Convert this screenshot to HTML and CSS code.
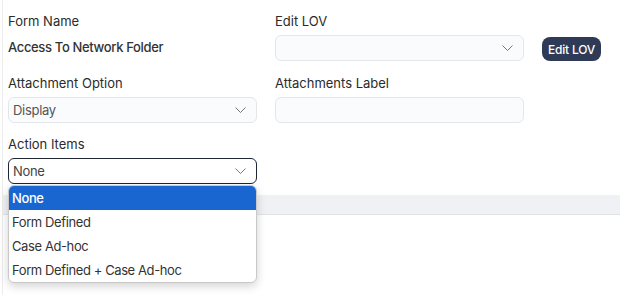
FILE: index.html
```html
<!DOCTYPE html>
<html lang="en">
<head>
    <meta charset="UTF-8">
    <meta name="viewport" content="width=device-width, initial-scale=1.0">
    <title>Form settings</title>
    <link rel="stylesheet" href="styles.css">
</head>
<body>
    <div class="card">
        <div class="form-grid">
            <div class="field">
                <div class="field-label">Form Name</div>
                <div class="field-value">Access To Network Folder</div>
            </div>
            <div class="field">
                <div class="field-label">Edit LOV</div>
                <div class="select">
                    <span class="select-text"></span>
                    <svg class="chevron" width="11" height="6" viewBox="0 0 11 6"><path d="M0.5 0.5 L5.5 5.5 L10.5 0.5" fill="none" stroke="#666" stroke-width="0.9"/></svg>
                </div>
            </div>
            <div class="field field-button">
                <button class="btn-dark">Edit LOV</button>
            </div>

            <div class="field">
                <div class="field-label">Attachment Option</div>
                <div class="select">
                    <span class="select-text">Display</span>
                    <svg class="chevron" width="11" height="6" viewBox="0 0 11 6"><path d="M0.5 0.5 L5.5 5.5 L10.5 0.5" fill="none" stroke="#666" stroke-width="0.9"/></svg>
                </div>
            </div>
            <div class="field">
                <div class="field-label">Attachments Label</div>
                <div class="input"></div>
            </div>
            <div></div>

            <div class="field">
                <div class="field-label">Action Items</div>
                <div class="select-wrap">
                    <div class="select focused">
                        <span class="select-text">None</span>
                        <svg class="chevron" width="11" height="6" viewBox="0 0 11 6"><path d="M0.5 0.5 L5.5 5.5 L10.5 0.5" fill="none" stroke="#666" stroke-width="0.9"/></svg>
                    </div>
                    <div class="dropdown">
                        <div class="option selected">None</div>
                        <div class="option">Form Defined</div>
                        <div class="option">Case Ad-hoc</div>
                        <div class="option">Form Defined + Case Ad-hoc</div>
                    </div>
                </div>
            </div>
        </div>

        <div class="section-bar"></div>
    </div>
</body>
</html>
```

FILE: styles.css
```css
body {
    margin: 0;
    background-color: #ffffff;
    color: #333333;
    font-family: Inter, "Noto Sans", sans-serif;
    font-size: 13px;
}
.card {
    border-left: 1px solid #ececec;
    margin-left: 2px;
    padding-top: 13px;
    height: 282px;
}
.form-grid {
    display: grid;
    grid-template-columns: 249px 249px auto;
    column-gap: 18px;
    row-gap: 13.5px;
    padding-left: 5px;
}
.field {
    display: flex;
    flex-direction: column;
    gap: 6px;
}
.field-label {
    height: 16px;
    line-height: 16px;
    color: #2b2b2b;
}
.field-value {
    height: 26px;
    line-height: 24px;
    font-weight: 500;
    letter-spacing: -0.35px;
    color: #333333;
}
.field-button {
    justify-content: flex-end;
}
.btn-dark {
    width: 59px;
    height: 24px;
    padding: 0;
    border: none;
    border-radius: 8px;
    background-color: #2e3a56;
    color: #ffffff;
    font-family: inherit;
    font-size: 12px;
    font-weight: 500;
    letter-spacing: -0.2px;
}
.select,
.input {
    box-sizing: border-box;
    height: 26px;
    border: 1px solid #e4e6ea;
    border-radius: 6px;
    background-color: #fafbfc;
}
.select {
    display: flex;
    align-items: center;
    justify-content: space-between;
    padding: 0 10px 0 4px;
}
.select-text {
    letter-spacing: -0.3px;
    color: #555555;
}
.select.focused {
    border-color: #1e2533;
    background-color: #ffffff;
}
.select.focused .select-text {
    color: #444444;
}
.select-wrap {
    position: relative;
}
.dropdown {
    position: absolute;
    top: 27px;
    left: 0;
    width: 249px;
    box-sizing: border-box;
    border-radius: 6px;
    border: 1px solid #c9c9c9;
    background-color: #ffffff;
    box-shadow: 0 3px 10px rgba(0, 0, 0, 0.18);
    overflow: hidden;
    z-index: 2;
}
.option {
    height: 24px;
    line-height: 24px;
    padding-left: 3px;
    letter-spacing: -0.4px;
    color: #333333;
}
.option.selected {
    background-color: #1a66d1;
    color: #ffffff;
    font-weight: 500;
}
.section-bar {
    margin-top: 11px;
    height: 19px;
    background-color: #f0f1f5;
    border-bottom: 1px solid #e2e3e7;
}
```
